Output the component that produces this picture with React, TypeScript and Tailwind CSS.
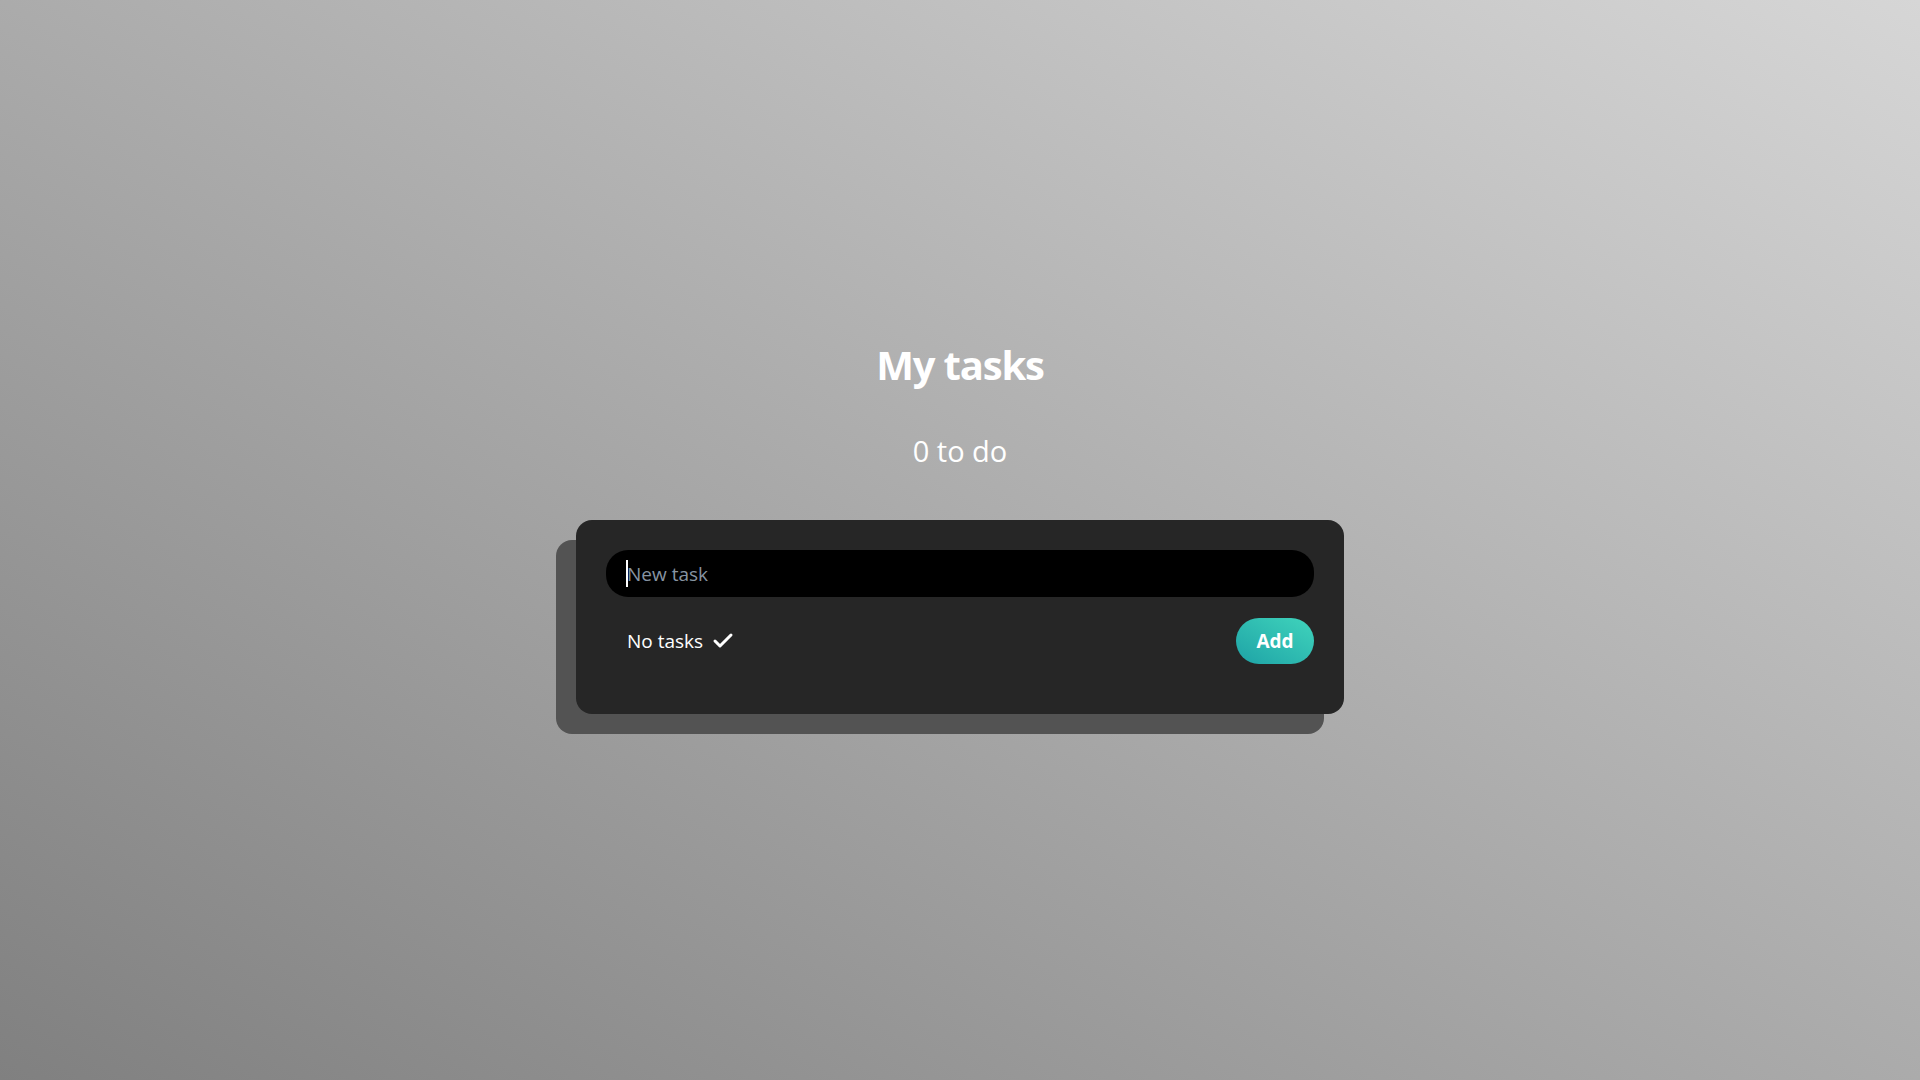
import { Check } from "lucide-react";

export default function App() {
  return (
    <div
      className="min-h-screen w-full flex flex-col items-center justify-center pb-[25px] bg-[linear-gradient(to_top_right,#808080,#d6d6d6)] text-white"
      style={{ fontFamily: '"Open Sans", "Noto Sans", sans-serif' }}
    >
      {/* Header */}
      <h1 className="text-[40px] leading-[48px] font-bold tracking-[-1.2px]">My tasks</h1>
      <p className="mt-[44px] text-[29px] leading-[36px] font-normal">0 to do</p>

      {/* Card with offset backdrop */}
      <div className="mt-[51px] w-[768px] rounded-2xl bg-[#262626] shadow-[-20px_20px_0_0_#535353] px-[30px] pt-[30px] pb-[50px]">
        <div className="relative">
          <input
            autoFocus
            type="text"
            placeholder="New task"
            className="w-full h-[47px] rounded-[22px] bg-black px-[21px] text-[19px] text-white caret-white outline-none placeholder:text-[#8794a2]"
          />
          {/* caret as captured in the reference */}
          <span className="pointer-events-none absolute left-[20px] top-[10px] h-[27px] w-[1.5px] bg-white" />
        </div>
        <div className="mt-[21px] flex items-center justify-between">
          <div className="flex items-center gap-[8px] pl-[21px] text-[19px]">
            <span>No tasks</span>
            <Check className="w-[24px] h-[24px]" strokeWidth={3} />
          </div>
          <button className="h-[46px] w-[78px] rounded-full bg-[linear-gradient(to_top_right,#1ea3a6,#40d4bc)] text-[19px] font-bold text-white">
            Add
          </button>
        </div>
      </div>
    </div>
  );
}
